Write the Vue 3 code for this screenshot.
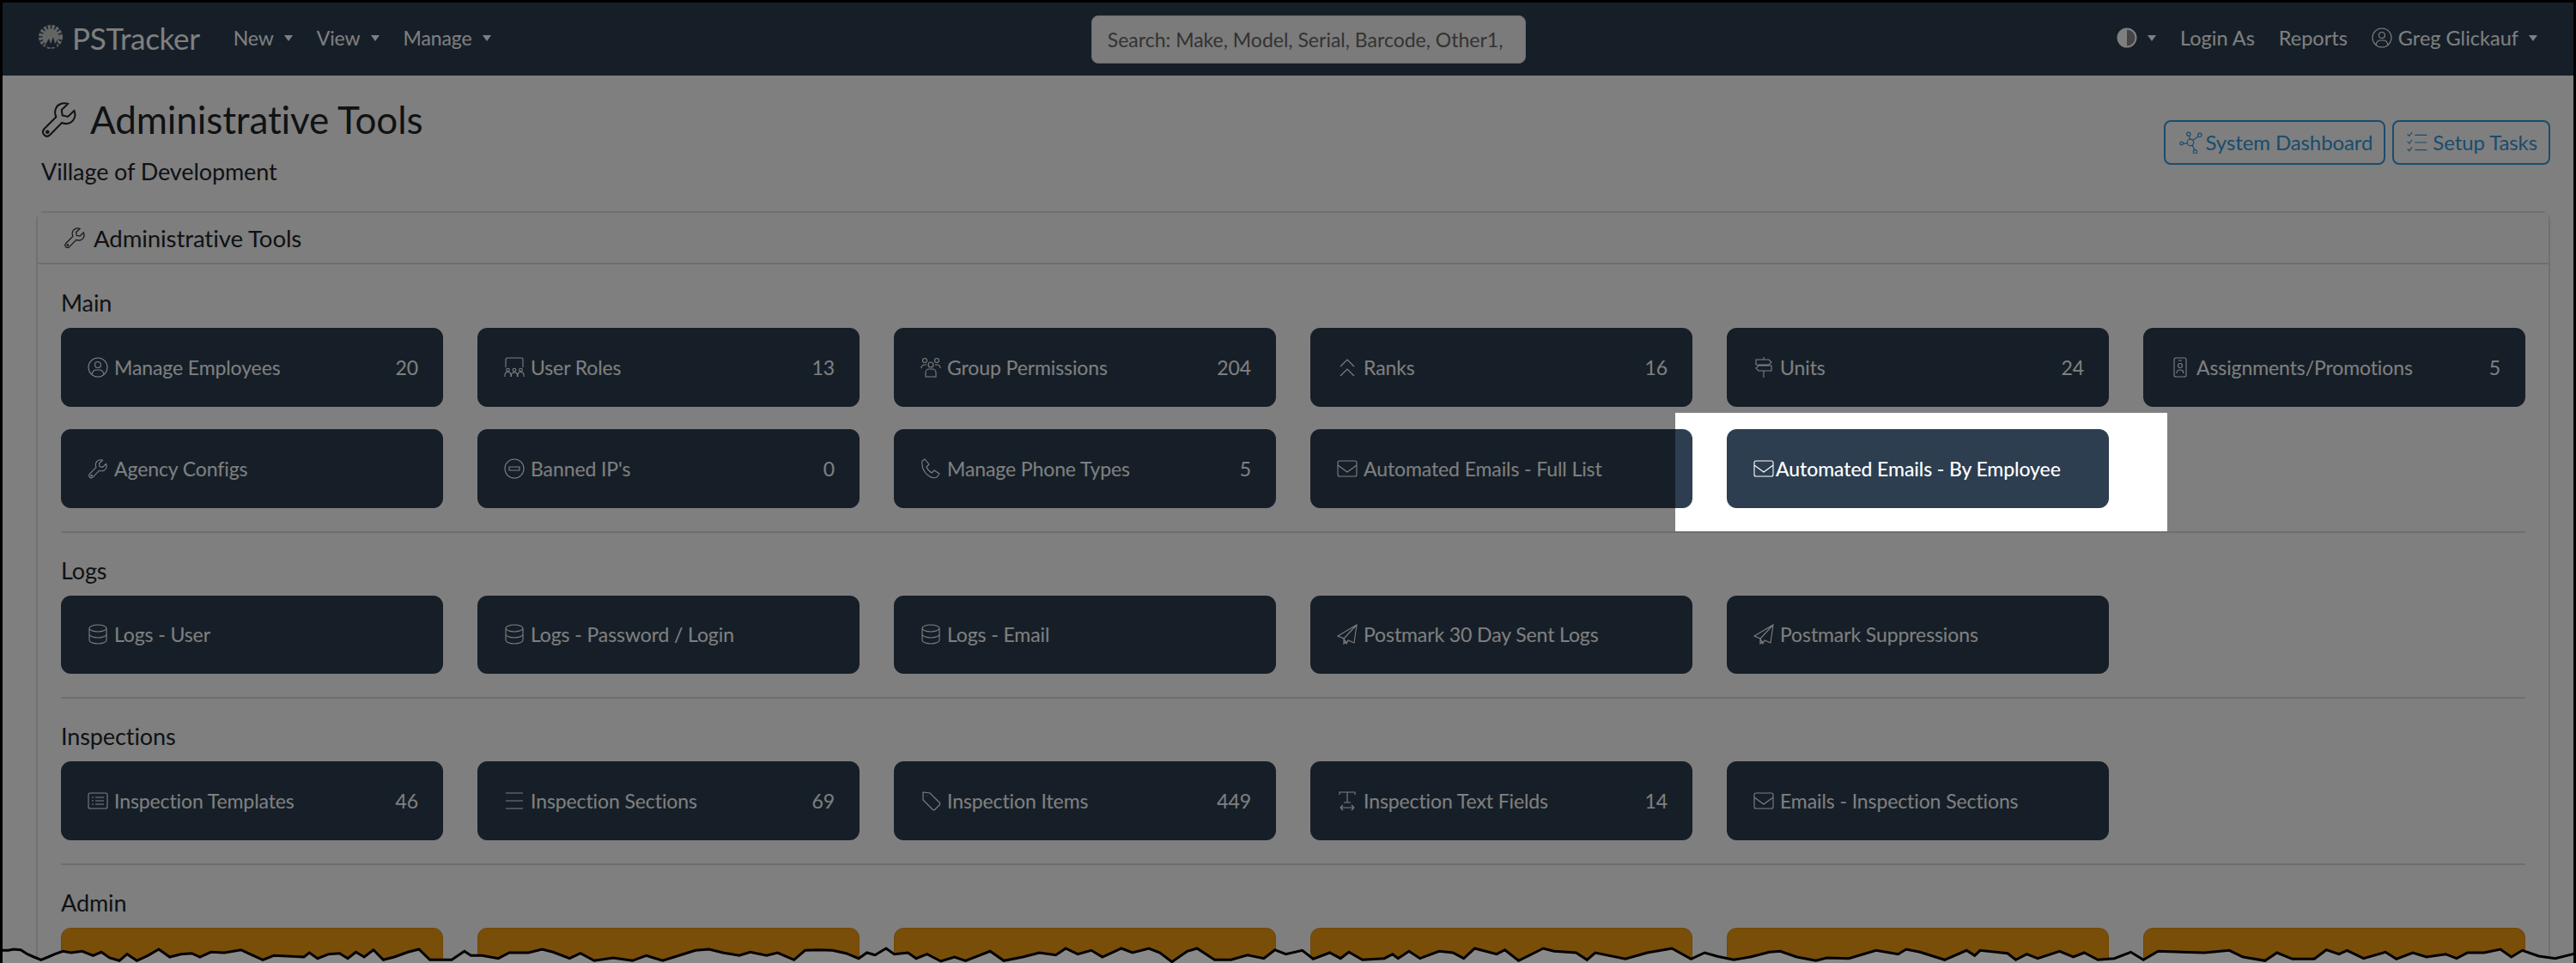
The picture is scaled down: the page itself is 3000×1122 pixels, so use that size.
<script setup>
const c = (x, y, r) => `M${x - r} ${y}a${r} ${r} 0 1 0 ${2 * r} 0a${r} ${r} 0 1 0 ${-2 * r} 0z`
const icons = {
  wrench: 'M21.5 6.5L17.5 10.3L14 9.5L13.5 6L17.5 2.2C14.5 1.2 11 2.2 9.8 5.2C9 7.3 9.3 9 10 10.5L2.5 18C1.3 19.5 1.5 21 2.5 22C3.5 23 5 23 6.2 21.8L13.7 14.2C15.5 15 17.5 15 19.3 14C21.8 12.5 22.7 9.5 21.5 6.5Z' + c(4.5, 20, 0.7),
  user: c(12, 12, 11) + c(12, 9, 3.5) + 'M5 20c1-3.5 3-5 5-5h4c2 0 4 1.5 5 5',
  screen: 'M2 12V3a2 2 0 0 1 2-2h16a2 2 0 0 1 2 2v9' + c(4.5, 15, 1.8) + c(12, 15, 1.8) + c(19.5, 15, 1.8) + 'M1 23v-2a3 3 0 0 1 7 0v2M8.5 23v-2a3.5 3 0 0 1 7 0v2M16 23v-2a3 3 0 0 1 7 0v2',
  group: c(5, 4, 2.5) + c(19, 4, 2.5) + c(12, 9, 3) + 'M1 13c0-3 2-4 4-4h2M23 13c0-3-2-4-4-4h-2M6 23v-5a4 4 0 0 1 4-4h4a4 4 0 0 1 4 4v5z',
  ranks: 'M4 11l8-8 8 8M4 22l8-8 8 8',
  units: 'M12 0v3M12 16v8M12 9v1M3 3h15l3 3-3 3H3zM21 10H6l-3 3 3 3h15z',
  badge: 'M7 1h10a2 2 0 0 1 2 2v18a2 2 0 0 1-2 2H7a2 2 0 0 1-2-2V3a2 2 0 0 1 2-2zM10 4h4' + c(12, 10, 2.5) + 'M8 19c0-3 2-4 4-4s4 1 4 4',
  ban: c(12, 12, 11) + 'M6 10h12v4H6z',
  phone: 'M5 1L2 3c-1 8 2 13 7 17 4 3 8 3 10 2l3-4-6-4-3 3c-3-2-5-4-6-7l3-3z',
  env: 'M3 3h18a2 2 0 0 1 2 2v14a2 2 0 0 1-2 2H3a2 2 0 0 1-2-2V5a2 2 0 0 1 2-2zM1 8l11 8 11-8',
  db: 'M2 5c0-2.2 4.5-4 10-4s10 1.8 10 4v14c0 2.2-4.5 4-10 4S2 21.2 2 19zM2 5c0 2.2 4.5 4 10 4s10-1.8 10-4M2 12c0 2.2 4.5 4 10 4s10-1.8 10-4',
  plane: 'M23 1L1 14l7 3 3 6 2-4 7 3zM23 1L8 17v6l3-3',
  list: 'M3 3h18a2 2 0 0 1 2 2v14a2 2 0 0 1-2 2H3a2 2 0 0 1-2-2V5a2 2 0 0 1 2-2zM5 8h2M5 12h2M5 16h2M9 8h10M9 12h10M9 16h10',
  bars: 'M2 3h20M2 12h20M2 21h20',
  tags: 'M3 2l8 1 11 11c1 1 1 2 0 3l-5 5c-1 1-2 1-3 0L3 11zM7 6v.5',
  text: 'M3 5V2h18v3M12 2v12M8 14h8M4 20h16M4 20l3-3M4 20l3 3M20 20l-3-3M20 20l-3 3',
  network: c(2.5, 13, 1.7) + c(12, 12, 3.5) + c(10, 3, 2) + c(22, 4, 2) + c(17, 22, 2) + 'M4 13h4.5M10.5 5l1 3.5M20.5 5.5l-6 4M14 15l2.5 5',
  tasks: 'M10 4h13M10 12h13M10 20h13M2 3l2 2 3-4M2 11l2 2 3-4M2 19l2 2 3-4'
}

const sections = [
  { title: 'Main', items: [
    { icon: 'user', label: 'Manage Employees', count: 20 },
    { icon: 'screen', label: 'User Roles', count: 13 },
    { icon: 'group', label: 'Group Permissions', count: 204 },
    { icon: 'ranks', label: 'Ranks', count: 16 },
    { icon: 'units', label: 'Units', count: 24 },
    { icon: 'badge', label: 'Assignments/Promotions', count: 5 },
    { icon: 'wrench', label: 'Agency Configs' },
    { icon: 'ban', label: "Banned IP's", count: 0 },
    { icon: 'phone', label: 'Manage Phone Types', count: 5 },
    { icon: 'env', label: 'Automated Emails - Full List' },
    { icon: 'env', label: 'Automated Emails - By Employee', active: true }
  ] },
  { title: 'Logs', items: [
    { icon: 'db', label: 'Logs - User' },
    { icon: 'db', label: 'Logs - Password / Login' },
    { icon: 'db', label: 'Logs - Email' },
    { icon: 'plane', label: 'Postmark 30 Day Sent Logs' },
    { icon: 'plane', label: 'Postmark Suppressions' }
  ] },
  { title: 'Inspections', items: [
    { icon: 'list', label: 'Inspection Templates', count: 46 },
    { icon: 'bars', label: 'Inspection Sections', count: 69 },
    { icon: 'tags', label: 'Inspection Items', count: 449 },
    { icon: 'text', label: 'Inspection Text Fields', count: 14 },
    { icon: 'env', label: 'Emails - Inspection Sections' }
  ] },
  { title: 'Admin', warn: true, items: Array.from({ length: 6 }, () => ({})) }
]

const traces = [
  [0, 1020, [[0,262],[15,262],[25,258],[38,260],[50,275],[62,285],[75,295],[88,285],[100,275],[115,265],[130,270],[150,265],[170,280],[185,268],[200,288],[218,298],[232,275],[250,298],[270,280],[290,258],[310,285],[330,275],[350,272],[365,285],[385,268],[410,270],[440,260],[460,278],[480,295],[500,280],[555,285],[565,270],[580,290],[600,275],[620,272],[635,290],[650,268],[665,285],[682,260],[700,295],[720,285],[745,268],[765,258],[785,295],[825,295],[848,265],[860,280],[880,280],[910,290],[930,270],[965,270],[990,258],[1010,268],[1040,290],[1060,272],[1085,298],[1120,288],[1155,298],[1180,280],[1210,298],[1240,280],[1270,262],[1295,258],[1320,270],[1350,280],[1370,268],[1400,280],[1420,270],[1450,295],[1470,262],[1495,260],[1520,262],[1545,272]]],
  [1000, 1060, [[0,170],[15,150],[30,158],[50,135],[65,155],[90,150],[105,170],[125,155],[150,180],[175,165],[195,178],[240,145],[265,178],[300,165],[330,150],[360,158],[378,135],[400,155],[425,142],[445,165],[480,135],[500,150],[530,135],[550,150],[572,182],[600,145],[618,135],[650,175],[680,175],[710,158],[740,170],[760,140],[780,155],[810,142],[830,172],[860,150],[880,170],[895,148],[920,175],[960,170],[975,155],[985,170],[1005,145],[1025,170],[1060,145],[1085,150],[1105,170],[1125,135],[1165,155],[1180,140],[1205,178],[1250,135],[1270,145],[1310,150],[1330,175],[1345,150],[1400,172],[1440,150],[1485,135],[1520,172],[1545,150]]],
  [2000, 1020, [[0,283],[30,295],[60,285],[95,268],[115,265],[145,285],[180,298],[200,288],[240,290],[290,262],[330,275],[345,258],[370,268],[415,295],[455,262],[470,280],[480,262],[530,272],[545,295],[565,275],[585,290],[625,265],[650,285],[670,270],[695,295],[725,290],[755,268],[778,295],[805,265],[890,270],[935,262],[960,285],[1000,298],[1022,270],[1050,292],[1090,292],[1112,260],[1135,275],[1150,262],[1180,290],[1220,268],[1240,292],[1270,270],[1295,285],[1330,275],[1350,290],[1370,270],[1400,270],[1430,258],[1450,285],[1470,262],[1500,282],[1530,290],[1568,272]]]
]
const tearPts = traces.flatMap(([x0, y0, pts]) =>
  pts.map(([x, y]) => [+(x0 + x / 1.568).toFixed(1), +(y0 + y / 3 - 1095).toFixed(1)]))
const tearLine = tearPts.map(p => p.join(',')).join(' ')
const tearFill = `0,27 ${tearLine} 3000,27`
</script>

<template>
  <div class="shot">
    <nav class="navbar">
      <div class="nav-left">
        <a class="brand">
          <svg class="logo" viewBox="0 0 32 32">
            <circle cx="16" cy="15" r="11" fill="none" stroke="currentColor" stroke-width="6" stroke-dasharray="3 1.4" />
            <circle cx="16" cy="15" r="9.5" fill="currentColor" />
            <path d="M6 31L14 17l2 6 3-8 2 8 3-5-1 9H13l-2-3-2 7z" fill="#2c3e50" />
          </svg>
          <span>PSTracker</span>
        </a>
        <a class="nav-link caret">New</a>
        <a class="nav-link caret">View</a>
        <a class="nav-link caret">Manage</a>
      </div>
      <input class="search" type="text" placeholder="Search: Make, Model, Serial, Barcode, Other1," />
      <div class="nav-right">
        <a class="nav-link caret theme">
          <svg class="half" viewBox="0 0 24 24">
            <circle cx="12" cy="12" r="10.5" fill="#8b8b8b" stroke="#fff" stroke-width="2" />
            <path d="M12 1a11 11 0 0 0 0 22z" fill="#fff" />
          </svg>
        </a>
        <a class="nav-link">Login As</a>
        <a class="nav-link">Reports</a>
        <a class="nav-link caret">
          <svg class="ic nav-ic" viewBox="0 0 24 24"><path :d="icons.user" /></svg>Greg Glickauf
        </a>
      </div>
    </nav>

    <main class="page">
      <header class="page-head">
        <div>
          <h1 class="title">
            <svg class="ic title-ic" viewBox="0 0 24 24"><path :d="icons.wrench" /></svg>Administrative Tools
          </h1>
          <p class="subtitle">Village of Development</p>
        </div>
        <div class="actions">
          <a class="outline">
            <svg class="ic act-ic net" viewBox="0 0 24 24"><path :d="icons.network" /></svg>System Dashboard
          </a>
          <a class="outline setup">
            <svg class="ic act-ic" viewBox="0 0 24 24"><path :d="icons.tasks" /></svg>Setup Tasks
          </a>
        </div>
      </header>

      <section class="card">
        <div class="card-head">
          <svg class="ic head-ic" viewBox="0 0 24 24"><path :d="icons.wrench" /></svg>Administrative Tools
        </div>
        <div class="card-body">
          <div v-for="(s, i) in sections" :key="s.title" class="group">
            <hr v-if="i > 0" class="rule" />
            <div class="group-title">{{ s.title }}</div>
            <div class="tiles">
              <a
                v-for="(t, j) in s.items"
                :key="j"
                class="tile"
                :class="{ warn: s.warn, active: t.active }"
              >
                <span class="tile-label">
                  <svg v-if="t.icon" class="ic tile-ic" viewBox="0 0 24 24"><path :d="icons[t.icon]" /></svg>{{ t.label }}
                </span>
                <span v-if="t.count !== undefined" class="count">{{ t.count }}</span>
              </a>
            </div>
          </div>
        </div>
      </section>
    </main>

    <div class="spotlight"></div>

    <svg class="tear" viewBox="0 0 3000 27" preserveAspectRatio="none">
      <polygon :points="tearFill" fill="#8a8a8a" />
      <polyline :points="tearLine" fill="none" stroke="#000" stroke-width="3" />
    </svg>
  </div>
</template>

<style>
html, body { margin: 0; background: #000; }
</style>

<style scoped>
.shot {
  position: relative;
  width: 3000px;
  height: 1122px;
  box-sizing: border-box;
  overflow: hidden;
  border: solid #000;
  border-width: 3px 3px 0;
  background: #fff;
  color: #212529;
  font-family: Lato, "Liberation Sans", sans-serif;
  font-size: 23px;
  letter-spacing: -0.1px;
}
.ic {
  fill: none;
  stroke: currentColor;
  stroke-width: 1.1;
  flex: none;
}

/* navbar */
.navbar {
  display: flex;
  align-items: center;
  height: 85px;
  box-sizing: border-box;
  padding: 0 42px 0 40px;
  background: #2c3e50;
  color: #fff;
}
.nav-left, .nav-right {
  display: flex;
  align-items: center;
  gap: 28px;
  margin-bottom: 3px;
}
.nav-right {
  margin-left: auto;
  font-size: 23.5px;
  letter-spacing: 0;
}
.brand {
  display: flex;
  align-items: center;
  gap: 9px;
  margin-right: 11px;
  font-size: 35px;
  letter-spacing: -0.3px;
}
.logo { width: 32px; height: 32px; flex: none; color: #c8c8c8; }
.nav-link {
  display: flex;
  align-items: center;
  white-space: nowrap;
}
.caret::after {
  content: "";
  margin-left: 12px;
  border-top: 7px solid currentColor;
  border-left: 5.5px solid transparent;
  border-right: 5.5px solid transparent;
}
.half { width: 24px; height: 24px; }
.nav-ic { width: 24px; height: 24px; margin-right: 7px; }
.search {
  display: block;
  margin-left: auto;
  margin-right: -11px;
  width: 506px;
  height: 56px;
  box-sizing: border-box;
  padding: 0 18px;
  border: 1px solid #ddd;
  border-radius: 8px;
  background: #f6f6f6;
  font: inherit;
  letter-spacing: 0;
  outline: none;
}
.search::placeholder { color: #666; opacity: 1; }

/* page */
.page { padding: 25px 27px 0 39px; }
.page-head {
  display: flex;
  align-items: center;
  justify-content: space-between;
  margin-bottom: 30px;
}
.title {
  display: flex;
  align-items: center;
  margin: 0;
  height: 52px;
  padding-left: 5px;
  font-size: 44px;
  font-weight: 400;
  line-height: 52px;
}
.title-ic { width: 44px; height: 44px; margin-right: 14px; }
.subtitle {
  margin: 19px 0 0;
  padding-left: 6px;
  font-size: 27px;
  line-height: 32px;
}
.actions { display: flex; gap: 8px; margin-top: 2px; font-size: 24px; }
.outline {
  display: flex;
  align-items: center;
  height: 52px;
  box-sizing: border-box;
  padding: 0 13px;
  border: 2px solid #3498db;
  border-radius: 8px;
  color: #3498db;
  white-space: nowrap;
}
.outline.setup { padding: 0 13px; }
.act-ic { width: 27px; height: 26px; margin-right: 5px; }
.act-ic.net { width: 32px; margin-right: 2px; }

/* card */
.card {
  border: 2px solid #e0e0e0;
  border-bottom: 0;
  border-radius: 10px 10px 0 0;
}
.card-head {
  display: flex;
  align-items: center;
  height: 60px;
  box-sizing: border-box;
  padding: 0 30px;
  border-bottom: 2px solid #dcdcdc;
  background: #fdfdfd;
  font-size: 27.6px;
}
.head-ic { width: 26px; height: 26px; margin-right: 9px; }
.card-body { padding: 25px 27px 0; }
.rule {
  height: 2px;
  margin: 27px 0 24px;
  border: 0;
  background: #dcdcdc;
}
.group-title {
  margin-bottom: 9px;
  font-size: 27px;
  line-height: 40px;
}
.tiles {
  display: grid;
  grid-template-columns: repeat(6, 445px);
  grid-auto-rows: 91.5px;
  column-gap: 40px;
  row-gap: 26.5px;
}
.tile {
  display: flex;
  align-items: center;
  justify-content: space-between;
  padding: 0 28px 0 30px;
  border: 1px solid #2c3e50;
  border-radius: 11px;
  background: #2c3e50;
  color: #fff;
}
.tile.warn { background: #f39c12; border-color: #e08e0b; }
.tile-label { display: flex; align-items: center; white-space: nowrap; }
.tile-ic { width: 24px; height: 24px; margin-right: 7px; }
.tile.active .tile-ic { margin-right: 2px; }
.tile.active .tile-label { font-weight: 500; }

/* callout */
.spotlight {
  position: absolute;
  left: 1948px;
  top: 478px;
  width: 573px;
  height: 138px;
  box-shadow: 0 0 0 4000px rgba(0, 0, 0, 0.5);
  pointer-events: none;
}
.tear {
  position: absolute;
  left: -3px;
  bottom: 0;
  width: 3000px;
  height: 27px;
}
</style>
